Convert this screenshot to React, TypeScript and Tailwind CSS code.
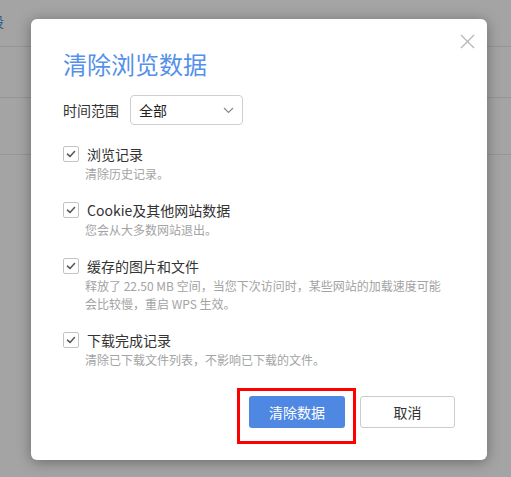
import React from "react";

type Item = { label: string; desc: React.ReactNode };

const items: Item[] = [
  { label: "浏览记录", desc: "清除历史记录。" },
  { label: "Cookie及其他网站数据", desc: "您会从大多数网站退出。" },
  {
    label: "缓存的图片和文件",
    desc: (
      <>
        释放了 22.50 MB 空间，当您下次访问时，某些网站的加载速度可能
        <br />
        会比较慢，重启 WPS 生效。
      </>
    ),
  },
  { label: "下载完成记录", desc: "清除已下载文件列表，不影响已下载的文件。" },
];

function CheckBox() {
  return (
    <span className="flex h-[16px] w-[16px] shrink-0 items-center justify-center rounded-[2px] border border-[#c4c4c4] bg-white">
      <svg width="10" height="8" viewBox="0 0 10 8" fill="none">
        <path d="M1.5 4.2 L4 6.5 L8.5 1.5" stroke="#5a5a5a" strokeWidth="1.6" strokeLinecap="round" strokeLinejoin="round" />
      </svg>
    </span>
  );
}

export default function App() {
  return (
    <div
      className="relative h-[477px] w-[511px] overflow-hidden bg-[#a4a4a4]"
      style={{ fontFamily: '"Noto Sans CJK SC", "Noto Sans", sans-serif' }}
    >
      {/* page behind the modal */}
      <div className="flex flex-col">
        <div className="h-[47px] border-b border-[#959595] pt-[8px]">
          <span className="-ml-[10px] text-[14px] text-[#2f5a84]">设</span>
        </div>
        <div className="h-[51px] border-b border-[#959595]" />
        <div className="h-[57px] border-b border-[#959595]" />
      </div>

      {/* dialog */}
      <div className="absolute left-[31px] top-[19px] flex h-[441px] w-[456px] flex-col rounded-[6px] bg-white px-8 pt-[29px] shadow-[0_2px_14px_rgba(0,0,0,0.35)]">
        <button className="absolute right-[12px] top-[15px] p-0">
          <svg width="15" height="15" viewBox="0 0 15 15" fill="none">
            <path d="M1 1 L14 14 M14 1 L1 14" stroke="#b5b5b5" strokeWidth="1.2" />
          </svg>
        </button>

        <h1 className="text-[24px] leading-[32px] text-[#5590ea]">清除浏览数据</h1>

        <div className="mt-[15px] flex items-center gap-[11px]">
          <span className="text-[14px] leading-[20px] text-[#333]">时间范围</span>
          <div className="flex h-[30px] w-[113px] items-center justify-between rounded-[4px] border border-[#cfcfcf] pl-[8px] pr-[8px]">
            <span className="text-[14px] text-[#222]">全部</span>
            <svg width="11" height="7" viewBox="0 0 11 7" fill="none">
              <path d="M1 1 L5.5 5.5 L10 1" stroke="#8a8a8a" strokeWidth="1.2" />
            </svg>
          </div>
        </div>

        <div className="mt-[19px] flex flex-col gap-[17px]">
          {items.map((it) => (
            <div key={it.label} className="flex flex-col">
              <div className="flex h-[20px] items-center gap-[8px]">
                <CheckBox />
                <span className="text-[14px] leading-[20px] text-[#333]">{it.label}</span>
              </div>
              <p className="mt-[1px] pl-[22px] text-[12px] leading-[18px] text-[#a3a3a3]">{it.desc}</p>
            </div>
          ))}
        </div>

        <div className="mt-auto mb-[32px] flex justify-end gap-[15px]">
          <div className="relative">
            <button className="h-[32px] w-[96px] rounded-[3px] bg-[#4f88e3] text-[14px] text-white">清除数据</button>
            <span className="pointer-events-none absolute left-[-12px] top-[-8px] h-[56px] w-[119px] border-[3px] border-[#ff0000]" />
          </div>
          <button className="h-[32px] w-[95px] rounded-[3px] border border-[#cccccc] bg-white text-[14px] text-[#333]">取消</button>
        </div>
      </div>
    </div>
  );
}
